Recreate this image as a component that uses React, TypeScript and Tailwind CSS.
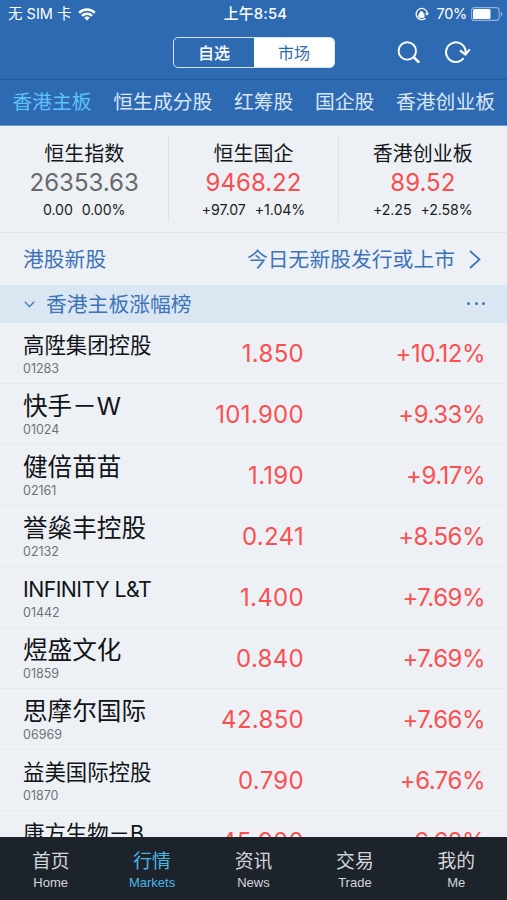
import { LockKeyhole } from 'lucide-react'

interface IndexQuote {
  readonly name: string
  readonly value: string
  readonly change: string
  readonly percent: string
  readonly up: boolean
}

interface Stock {
  readonly name: string
  readonly code: string
  readonly price: string
  readonly percent: string
  readonly small?: boolean
  readonly latin?: boolean
}

const boards = ['香港主板', '恒生成分股', '红筹股', '国企股', '香港创业板']

const indexes: IndexQuote[] = [
  { name: '恒生指数', value: '26353.63', change: '0.00', percent: '0.00%', up: false },
  { name: '恒生国企', value: '9468.22', change: '+97.07', percent: '+1.04%', up: true },
  { name: '香港创业板', value: '89.52', change: '+2.25', percent: '+2.58%', up: true }
]

const stocks: Stock[] = [
  { name: '高陞集团控股', code: '01283', price: '1.850', percent: '+10.12%', small: true },
  { name: '快手－W', code: '01024', price: '101.900', percent: '+9.33%' },
  { name: '健倍苗苗', code: '02161', price: '1.190', percent: '+9.17%' },
  { name: '誉燊丰控股', code: '02132', price: '0.241', percent: '+8.56%' },
  { name: 'INFINITY L&T', code: '01442', price: '1.400', percent: '+7.69%', latin: true },
  { name: '煜盛文化', code: '01859', price: '0.840', percent: '+7.69%' },
  { name: '思摩尔国际', code: '06969', price: '42.850', percent: '+7.66%' },
  { name: '益美国际控股', code: '01870', price: '0.790', percent: '+6.76%', small: true },
  { name: '康方生物－B', code: '09926', price: '45.900', percent: '+6.62%', small: true }
]

const navItems = [
  { label: '首页', sub: 'Home' },
  { label: '行情', sub: 'Markets', active: true },
  { label: '资讯', sub: 'News' },
  { label: '交易', sub: 'Trade' },
  { label: '我的', sub: 'Me' }
]

function StatusBar() {
  return (
    <div className="grid h-7 grid-cols-[1fr_auto_1fr] items-center pl-2 pr-[4px] text-[14.5px] leading-7">
      <div className="flex items-center gap-[7px]">
        <span>无 SIM 卡</span>
        <svg width="18" height="13" viewBox="0 0 18 13" fill="none" stroke="currentColor" strokeWidth="2.4">
          <path d="M1.2 4.8a11 11 0 0 1 15.6 0" />
          <path d="M4 7.8a7 7 0 0 1 10 0" />
          <path d="M9 12.6 6.2 9.8a4 4 0 0 1 5.6 0z" fill="currentColor" stroke="none" />
        </svg>
      </div>
      <span className="text-[14.8px] font-medium tracking-[0.2px]">上午8:54</span>
      <div className="flex items-center justify-end">
        <span className="relative mr-2 flex size-[14px] items-center justify-center">
          <svg className="absolute inset-0" width="14" height="14" viewBox="0 0 14 14" fill="none" stroke="currentColor" strokeWidth="1.3">
            <path d="M10.6 11.2A5.6 5.6 0 1 1 12.2 5.6" />
            <path d="M10 5.8h4l-2 3z" fill="currentColor" stroke="none" />
          </svg>
          <LockKeyhole className="size-[7px] fill-current" strokeWidth={3} />
        </span>
        <span className="tracking-[-0.3px]">70%</span>
        <svg className="ml-1" width="32" height="14" viewBox="0 0 32 14">
          <rect x="0.6" y="0.6" width="27.5" height="12.8" rx="3" fill="none" stroke="#8fb2e0" strokeWidth="1.1" />
          <rect x="2" y="2" width="17.5" height="10" rx="1.5" fill="white" />
          <path d="M29.8 4.6v4.8c2-.8 2-4 0-4.8z" fill="#8fb2e0" />
        </svg>
      </div>
    </div>
  )
}

function TopBar() {
  return (
    <div className="grid h-[52px] grid-cols-[173px_162px_1fr] items-start border-b border-[#245a9c] pt-[9px]">
      <div />
      <div className="flex h-[31px] overflow-hidden rounded-[5px] border-[1.5px] border-[#d5e3f5] text-center text-[16px] leading-[30px]">
        <span className="flex-1 font-medium">自选</span>
        <span className="flex-1 bg-white text-[#2e6ab1]">市场</span>
      </div>
      <div className="flex items-start pl-[62px]">
        <svg className="mt-[3px]" width="25" height="25" viewBox="0 0 25 25" fill="none" stroke="currentColor" strokeWidth="1.9">
          <circle cx="10.3" cy="10.9" r="8.7" />
          <path d="M16.4 16.8l5.8 5.8" strokeWidth="2.6" />
        </svg>
        <svg className="ml-[22px] mt-[3px]" width="27" height="25" viewBox="0 0 27 25" fill="none" stroke="currentColor" strokeWidth="2">
          <path d="M19.6 18.2A9.8 9.8 0 1 1 21.6 11v3" />
          <path d="M16 10.4l5.4 4.2 4.4-5.2" strokeWidth="2.2" />
        </svg>
      </div>
    </div>
  )
}

function BoardTabs() {
  return (
    <div className="flex h-[46px] gap-[21.7px] whitespace-nowrap border-b border-[#6f9ad6] pl-[12.5px] text-[19.8px] leading-[45px] text-[#d9e6f7]">
      {boards.map((board, i) => (
        <span key={board} className={i === 0 ? 'text-[#5ec3fb]' : undefined}>
          {board}
        </span>
      ))}
    </div>
  )
}

function IndexCard({ name, value, change, percent, up }: IndexQuote) {
  return (
    <div className="flex flex-1 flex-col items-center border-r border-[#dde2e6] pt-[6px] last:border-r-0">
      <span className="text-[20px] leading-6 text-[#15181b]">{name}</span>
      <span className={`text-[24px] leading-[34px] ${up ? 'text-[#fa4d4f]' : 'text-[#66696c]'}`}>{value}</span>
      <div className="flex gap-[9px] text-[14.2px] leading-5 tracking-[-0.1px] text-[#1b1e21]">
        <span>{change}</span>
        <span>{percent}</span>
      </div>
    </div>
  )
}

function StockRow({ name, code, price, percent, small, latin }: Stock) {
  const size = latin ? 'text-[21.3px] tracking-[-0.55px]' : small ? 'text-[21.4px]' : 'text-[24.6px]'
  return (
    <div className="flex h-[61px] shrink-0 border-b border-[#e5eaed] pl-[23px] pr-[22px]">
      <div className="w-[160px] whitespace-nowrap pt-[7px]">
        <div className={`leading-[30px] text-[#111417] ${size}`}>{name}</div>
        <div className="text-[12.5px] leading-[18px] text-[#707376]">{code}</div>
      </div>
      <div className="w-[121px] pt-px text-right text-[24px] leading-[60px] tracking-[0.3px] text-[#fa5051]">{price}</div>
      <div className="flex-1 pt-px text-right text-[24px] leading-[60px] tracking-[-0.5px] text-[#fa5051]">{percent}</div>
    </div>
  )
}

export default function App() {
  return (
    <div className="flex h-[900px] w-[507px] flex-col overflow-hidden bg-[#edf1f5] font-[Inter,'Noto_Sans_CJK_SC',sans-serif]">
      <header className="shrink-0 bg-[#2e6ab1] text-white">
        <StatusBar />
        <TopBar />
        <BoardTabs />
      </header>

      <section className="flex h-[107px] shrink-0 border-b border-[#dfe4e8] pb-[11px] pt-[10px]">
        {indexes.map((item) => (
          <IndexCard key={item.name} {...item} />
        ))}
      </section>

      <div className="flex h-[52px] shrink-0 items-center justify-between pl-[23px] pr-[26px] pt-px text-[20.8px] text-[#3e74b8]">
        <span>港股新股</span>
        <div className="flex items-center gap-[14px]">
          <span>今日无新股发行或上市</span>
          <svg width="12" height="19" viewBox="0 0 12 19" fill="none" stroke="currentColor" strokeWidth="1.8">
            <path d="M1 1l9.5 8.5L1 18" />
          </svg>
        </div>
      </div>

      <div className="flex h-[38px] shrink-0 items-center bg-[#dae6f2] pl-6 pr-[22px] text-[20.8px] text-[#3e74b8]">
        <svg className="mr-[11px]" width="11" height="7" viewBox="0 0 11 7" fill="none" stroke="currentColor" strokeWidth="1.3">
          <path d="M0.8 0.8l4.7 4.8 4.7-4.8" />
        </svg>
        <span className="pt-px">香港主板涨幅榜</span>
        <div className="ml-auto flex gap-[4.5px] pb-px">
          <i className="size-[3px] rounded-full bg-current" />
          <i className="size-[3px] rounded-full bg-current" />
          <i className="size-[3px] rounded-full bg-current" />
        </div>
      </div>

      <main className="flex min-h-0 flex-1 flex-col overflow-hidden">
        {stocks.map((stock) => (
          <StockRow key={stock.code} {...stock} />
        ))}
      </main>

      <nav className="grid h-[63px] shrink-0 grid-cols-5 bg-[#1d232a] pt-[13px] text-center text-[#d2d6da]">
        {navItems.map((item) => (
          <div key={item.sub} className={item.active ? 'text-[#4bb7e8]' : undefined}>
            <div className="text-[18.8px] leading-6">{item.label}</div>
            <div className="font-['Liberation_Sans',sans-serif] text-[13px] leading-[18px]">{item.sub}</div>
          </div>
        ))}
      </nav>
    </div>
  )
}
